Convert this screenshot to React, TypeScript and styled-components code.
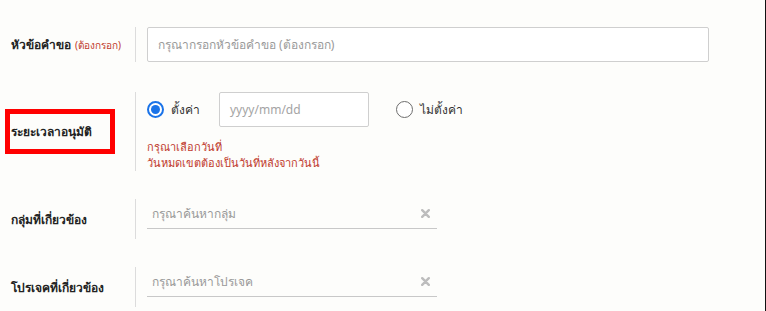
import React from "react";
import styled, { createGlobalStyle } from "styled-components";

const GlobalStyle = createGlobalStyle`
  html, body {
    margin: 0;
    padding: 0;
    background: #fdfdfb;
  }
  body {
    font-family: Tahoma, "Noto Sans", "DejaVu Sans", sans-serif;
    color: #222;
  }
`;

const Page = styled.div`
  width: 766px;
  height: 311px;
  box-sizing: border-box;
  border-right: 1px solid #111;
  padding-top: 27px;
  overflow: hidden;
`;

const Row = styled.div<{ $gap?: number }>`
  display: flex;
  align-items: center;
  margin-bottom: ${(p) => p.$gap ?? 28}px;
`;

const LabelCell = styled.div<{ $marked?: boolean }>`
  position: relative;
  width: 135px;
  box-sizing: border-box;
  padding-left: 11px;
  font-size: 12px;
  font-weight: bold;
  color: #222;
  white-space: nowrap;

  ${(p) =>
    p.$marked &&
    `
    &::after {
      content: "";
      position: absolute;
      left: 5px;
      top: 50%;
      width: 110px;
      height: 45px;
      margin-top: -23px;
      box-sizing: border-box;
      border: 5px solid #ff0000;
    }
  `}
`;

const Required = styled.span`
  font-size: 10px;
  font-weight: normal;
  color: #c0392b;
  margin-left: 4px;
`;

const Field = styled.div`
  border-left: 1px solid #dcdcdc;
  padding-left: 11px;
  display: flex;
  flex-direction: column;
`;

const TextBox = styled.div<{ $width: number }>`
  width: ${(p) => p.$width}px;
  height: 35px;
  box-sizing: border-box;
  border: 1px solid #cfcfcf;
  border-radius: 2px;
  background: #fff;
  padding: 0 10px;
  display: flex;
  align-items: center;
  font-size: 12px;
  color: #9a9a9a;
`;

const RadioLine = styled.div`
  display: flex;
  align-items: center;
  height: 35px;
`;

const RadioOption = styled.label`
  display: flex;
  align-items: center;
  gap: 7px;
  font-size: 12px;
  color: #333;
`;

const RadioDot = styled.span<{ $checked?: boolean }>`
  width: 17px;
  height: 17px;
  box-sizing: border-box;
  border-radius: 50%;
  border: ${(p) => (p.$checked ? "2px solid #1a73e8" : "1px solid #6d6d6d")};
  background: #fff;
  display: flex;
  align-items: center;
  justify-content: center;

  &::after {
    content: "";
    display: ${(p) => (p.$checked ? "block" : "none")};
    width: 9px;
    height: 9px;
    border-radius: 50%;
    background: #1a73e8;
  }
`;

const DateBox = styled(TextBox)`
  margin: 0 27px 0 19px;
  color: #a4a4a4;
`;

const ErrorText = styled.div`
  margin-top: 12px;
  font-size: 11px;
  line-height: 16px;
  color: #c0392b;
`;

const SearchBox = styled.div`
  width: 290px;
  height: 30px;
  box-sizing: border-box;
  border-bottom: 1px solid #c8c8c8;
  padding: 0 7px 0 5px;
  margin-bottom: 10px;
  display: flex;
  align-items: center;
  justify-content: space-between;
  font-size: 12px;
  color: #999;
`;

const ClearIcon = () => (
  <svg width="9" height="9" viewBox="0 0 9 9">
    <path
      d="M1.2 1.2 L7.8 7.8 M7.8 1.2 L1.2 7.8"
      stroke="#bdbdbd"
      strokeWidth="2.4"
      strokeLinecap="round"
    />
  </svg>
);

export default function App() {
  return (
    <>
      <GlobalStyle />
      <Page>
        <Row $gap={30}>
          <LabelCell>
            หัวข้อคำขอ<Required>(ต้องกรอก)</Required>
          </LabelCell>
          <Field>
            <TextBox $width={562}>กรุณากรอกหัวข้อคำขอ (ต้องกรอก)</TextBox>
          </Field>
        </Row>

        <Row>
          <LabelCell $marked>ระยะเวลาอนุมัติ</LabelCell>
          <Field>
            <RadioLine>
              <RadioOption>
                <RadioDot $checked />
                ตั้งค่า
              </RadioOption>
              <DateBox $width={150}>yyyy/mm/dd</DateBox>
              <RadioOption>
                <RadioDot />
                ไม่ตั้งค่า
              </RadioOption>
            </RadioLine>
            <ErrorText>
              กรุณาเลือกวันที่
              <br />
              วันหมดเขตต้องเป็นวันที่หลังจากวันนี้
            </ErrorText>
          </Field>
        </Row>

        <Row>
          <LabelCell>กลุ่มที่เกี่ยวข้อง</LabelCell>
          <Field>
            <SearchBox>
              กรุณาค้นหากลุ่ม
              <ClearIcon />
            </SearchBox>
          </Field>
        </Row>

        <Row>
          <LabelCell>โปรเจคที่เกี่ยวข้อง</LabelCell>
          <Field>
            <SearchBox>
              กรุณาค้นหาโปรเจค
              <ClearIcon />
            </SearchBox>
          </Field>
        </Row>
      </Page>
    </>
  );
}
